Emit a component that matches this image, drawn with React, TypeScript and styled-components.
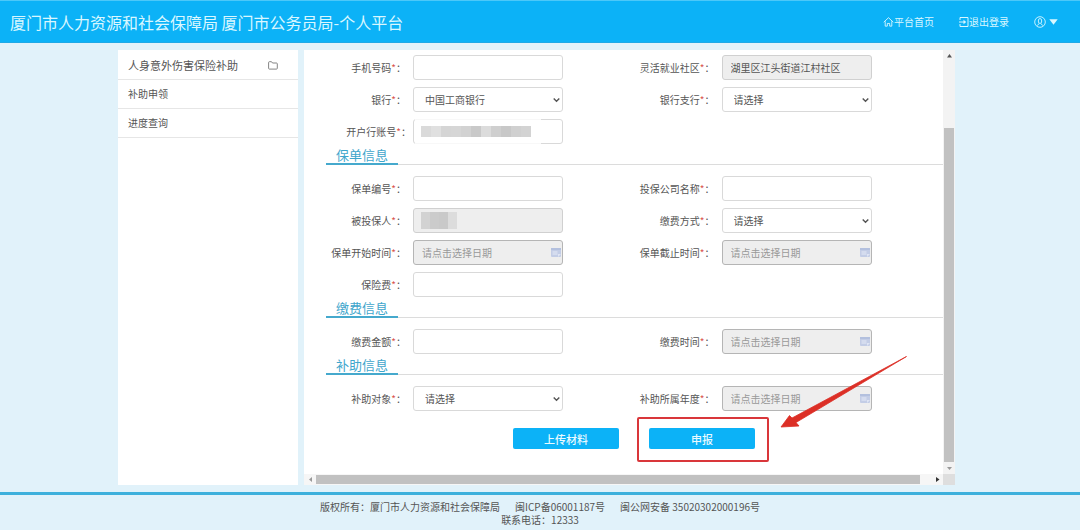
import React, { useId } from 'react';
import styled, { createGlobalStyle, css } from 'styled-components';

const GlobalStyle = createGlobalStyle`
  *, *::before, *::after { box-sizing: border-box; }
  body {
    margin: 0;
    background: #e1f2fa;
    color: #555;
    font-family: "Noto Sans CJK SC", sans-serif;
    font-size: 10px;
    line-height: 12px;
  }
  button, input, select { font: inherit; color: inherit; margin: 0; }
  a { color: inherit; text-decoration: none; }
`;

const Page = styled.div`
  display: flex;
  flex-direction: column;
  min-height: 100vh;
`;

const Header = styled.header`
  display: flex;
  align-items: center;
  justify-content: space-between;
  height: 43px;
  padding: 0 22px 0 10px;
  background: #0cb2f7;
  border-top: 1px solid #4cc8f9;
  border-bottom: 1px solid #1fa9e6;
  color: #d9f7ff;
`;

const SiteTitle = styled.h1`
  margin: 0;
  font-size: 16px;
  font-weight: 400;
  line-height: 24px;
  white-space: nowrap;
`;

const Nav = styled.nav`
  display: flex;
  align-items: center;
  gap: 25px;
  white-space: nowrap;
`;

const NavLink = styled.a`
  display: flex;
  align-items: center;
`;

const UserButton = styled.button`
  display: flex;
  align-items: center;
  gap: 3px;
  padding: 0;
  border: 0;
  background: none;
  cursor: pointer;
`;

const Body = styled.div`
  display: flex;
  flex: 1;
  gap: 6px;
  padding: 7px 125px 7px 118px;
`;

const Sidebar = styled.aside`
  flex: 0 0 180px;
  padding-top: 1px;
  background: #fff;
`;

const Menu = styled.ul`
  margin: 0;
  padding: 0;
  list-style: none;
`;

const MenuItem = styled.li`
  border-bottom: 1px solid #e6e6e6;
`;

const MenuLink = styled.a<{ $heading?: boolean }>`
  display: flex;
  align-items: center;
  justify-content: space-between;
  height: 28px;
  padding: 0 20px 0 10px;
  font-size: ${p => (p.$heading ? '11px' : '10px')};
`;

const Panel = styled.main`
  display: grid;
  flex: 1;
  min-width: 0;
  grid-template-columns: minmax(0, 1fr) 12px;
  grid-template-rows: 1fr 11px;
  background: #fff;
`;

const Form = styled.form`
  padding: 5px 0 25px 22px;
`;

const Fields = styled.div`
  display: grid;
  grid-template-columns: 1fr 1fr;
  row-gap: 7px;
`;

const FieldRow = styled.div<{ $first?: boolean; $tight?: boolean }>`
  display: flex;
  align-items: center;
  gap: ${p => (p.$tight ? '2px' : '7px')};
  height: 25px;
  ${p => p.$first && css`grid-column: 1;`}
`;

const Label = styled.label<{ $tight?: boolean }>`
  flex: 0 0 ${p => (p.$tight ? '85px' : '80px')};
  display: flex;
  justify-content: flex-end;
  white-space: nowrap;
`;

const Required = styled.span`
  color: #d9534f;
`;

const Control = styled.div`
  position: relative;
  width: 150px;
`;

const box = css`
  display: block;
  width: 100%;
  height: 25px;
  border: 1px solid #d9d9d9;
  border-radius: 3px;
  background: #fff;
  outline: 0;
`;

const TextInput = styled.input<{ $date?: boolean }>`
  ${box}
  padding: 0 8px;
  &:read-only {
    background: #eee;
    border-color: ${p => (p.$date ? '#b5b5b5' : '#d0d0d0')};
  }
  &::placeholder { color: #999; opacity: 1; }
`;

const Select = styled.select`
  ${box}
  padding: 0 11px;
  appearance: none;
`;

const Trailing = styled.span`
  position: absolute;
  top: 0;
  bottom: 0;
  right: 2px;
  display: flex;
  align-items: center;
  pointer-events: none;
`;

const Mask = styled.span<{ $veil?: boolean }>`
  position: absolute;
  top: ${p => (p.$veil ? '0' : '4px')};
  left: ${p => (p.$veil ? '2px' : '8px')};
  display: flex;
  padding: ${p => (p.$veil ? '7px 10px 7px 6px' : '0')};
  background: rgba(255, 255, 255, 0.8);
  pointer-events: none;
`;

const MaskBlock = styled.span<{ $tone: string; $tall?: boolean }>`
  width: ${p => (p.$tall ? '9px' : '10px')};
  height: ${p => (p.$tall ? '17px' : '11px')};
  background: ${p => p.$tone};
`;

const SectionHead = styled.div`
  display: flex;
  height: 21px;
  margin-bottom: 11px;
  border-bottom: 1px solid #dcdcdc;
`;

const SectionTitle = styled.h2`
  height: 21px;
  margin: 0;
  padding: 0 10px;
  border-bottom: 2px solid #45a9cd;
  color: #3fa6cc;
  font-size: 13px;
  font-weight: 400;
  line-height: 22px;
`;

const Actions = styled.div`
  display: flex;
  gap: 30px;
  padding: 17px 0 0 187px;
`;

const ActionButton = styled.button`
  display: block;
  width: 106px;
  height: 21px;
  padding: 0;
  border: 0;
  border-radius: 2px;
  background: #0cb2f7;
  color: #eafaff;
  font-size: 11px;
  font-weight: 500;
  cursor: pointer;
`;

const Highlighted = styled.div`
  position: relative;
`;

const HighlightFrame = styled.span`
  position: absolute;
  top: -11px;
  right: -14px;
  bottom: -13px;
  left: -12px;
  border: 2px solid #d9363a;
  border-radius: 2px;
  pointer-events: none;
`;

const Arrow = styled.svg`
  position: absolute;
  left: 131px;
  bottom: 20px;
  pointer-events: none;
`;

const VBar = styled.div`
  display: flex;
  flex-direction: column;
  align-items: center;
  justify-content: space-between;
  padding: 3px 0;
  background: #f3f3f3;
`;

const VThumb = styled.span`
  flex: 1;
  width: 10px;
  margin: 70px 0 4px;
  background: #c1c1c1;
`;

const HBar = styled.div`
  display: flex;
  align-items: center;
  padding: 0 3px 0 4px;
  background: #f6f6f6;
`;

const HThumb = styled.span`
  flex: 1;
  height: 9px;
  margin: 0 15px 0 3px;
  background: #c1c1c1;
`;

const Corner = styled.div`
  background: #dedede;
`;

const Footer = styled.footer`
  border-top: 3px solid #3db0dc;
  padding: 5px 0 4px;
  line-height: 13px;
  text-align: center;
  color: #555;
`;

const FooterLine = styled.div`
  display: flex;
  justify-content: center;
  gap: 15px;
`;

const HomeIcon = () => (
  <svg width="11" height="12" viewBox="0 0 12 12" fill="none" stroke="currentColor" strokeWidth="1" aria-hidden="true">
    <path d="M0.8 6.2 6 1.3l5.2 4.9M2.4 5.2v5.3h2.3V7.6h2.6v2.9h2.3V5.2" />
  </svg>
);

const LogoutIcon = () => (
  <svg width="10" height="12" viewBox="0 0 10 12" fill="none" stroke="currentColor" strokeWidth="1" aria-hidden="true">
    <path d="M1 4V1.5h8v9H1V8M0 6h5.5" />
    <path d="M4.5 3.8 7.2 6 4.5 8.2Z" fill="currentColor" stroke="none" />
  </svg>
);

const UserIcon = () => (
  <svg width="12" height="12" viewBox="0 0 12 12" fill="none" stroke="currentColor" strokeWidth="0.9" aria-hidden="true">
    <circle cx="6" cy="6" r="5.3" />
    <ellipse cx="6" cy="5" rx="1.7" ry="2.5" />
    <path d="M3.4 9.6c.2-1 .9-1.500 1.700-1.800M8.600 9.600C8.400 8.600 7.700 8.100 6.900 7.800" />
  </svg>
);

const CaretIcon = () => (
  <svg width="9" height="6" viewBox="0 0 9 6" fill="currentColor" aria-hidden="true">
    <path d="M0.300 0.300h8.400L4.500 5.700Z" />
  </svg>
);

const FolderIcon = () => (
  <svg width="10" height="9" viewBox="0 0 10 9" fill="none" stroke="#777" strokeWidth="0.9" aria-hidden="true">
    <path d="M0.600 7.300V1.500c0-.5.300-.8.800-.8h2.100l1 1.300h4c.5 0 .8.300.8.800v4.500c0 .5-.3.800-.8.800H1.400c-.5 0-.8-.3-.8-.8Z" />
  </svg>
);

const ChevronIcon = () => (
  <svg width="9" height="6" viewBox="0 0 9 6" fill="none" stroke="#555" strokeWidth="1.400" aria-hidden="true">
    <path d="M1.700 1.400 4.500 4.200 7.300 1.400" />
  </svg>
);

const CalendarIcon = () => (
  <svg width="10" height="9" viewBox="0 0 10 9" aria-hidden="true">
    <rect width="10" height="9" rx="1" fill="#c3cde6" />
    <rect width="10" height="2" fill="#b3c0de" />
    <path d="M1.500 4h5M1.500 6h5" stroke="#e6ebf7" strokeWidth="1" />
    <path d="M7 9V6h3" fill="#dfe5f4" />
  </svg>
);

const ScrollArrow = ({ d, color = '#555' }: { d: string; color?: string }) => (
  <svg width="5" height="5" viewBox="0 0 5 5" fill={color} aria-hidden="true">
    <path d={d} />
  </svg>
);

type FieldProps = {
  label: string;
  kind?: 'text' | 'select' | 'date';
  value?: string;
  locked?: boolean;
  first?: boolean;
  tight?: boolean;
  mask?: React.ReactNode;
};

function Field({ label, kind = 'text', value, locked, first, tight, mask }: FieldProps) {
  const id = useId();
  return (
    <FieldRow $first={first} $tight={tight}>
      <Label htmlFor={id} $tight={tight}>
        {label}
        <Required>*</Required>：
      </Label>
      <Control>
        {kind === 'select' && (
          <>
            <Select id={id}>
              <option>{value ?? '请选择'}</option>
            </Select>
            <Trailing><ChevronIcon /></Trailing>
          </>
        )}
        {kind === 'date' && (
          <>
            <TextInput id={id} readOnly $date placeholder="请点击选择日期" />
            <Trailing><CalendarIcon /></Trailing>
          </>
        )}
        {kind === 'text' && <TextInput id={id} defaultValue={value} readOnly={locked} />}
        {mask}
      </Control>
    </FieldRow>
  );
}

const accountTones = ['#dadada', '#e0e0e0', '#d5d5d5', '#d6d6d6', '#d2d2d2', '#c9c9c9', '#dcdcdc', '#cfcfcf', '#c8c8c8', '#d0d0d0', '#d3d3d3'];
const nameTones = ['#d2d2d2', '#cbcbcb', '#c9c9c9', '#dcdcdc'];

const Section = ({ title }: { title: string }) => (
  <SectionHead>
    <SectionTitle>{title}</SectionTitle>
  </SectionHead>
);

export default function App() {
  return (
    <Page>
      <GlobalStyle />
      <Header>
        <SiteTitle>厦门市人力资源和社会保障局 厦门市公务员局-个人平台</SiteTitle>
        <Nav>
          <NavLink href="#home"><HomeIcon />平台首页</NavLink>
          <NavLink href="#logout"><LogoutIcon />退出登录</NavLink>
          <UserButton type="button" aria-label="用户"><UserIcon /><CaretIcon /></UserButton>
        </Nav>
      </Header>

      <Body>
        <Sidebar>
          <Menu>
            <MenuItem><MenuLink href="#insurance" $heading>人身意外伤害保险补助<FolderIcon /></MenuLink></MenuItem>
            <MenuItem><MenuLink href="#apply">补助申领</MenuLink></MenuItem>
            <MenuItem><MenuLink href="#progress">进度查询</MenuLink></MenuItem>
          </Menu>
        </Sidebar>

        <Panel>
          <Form onSubmit={e => e.preventDefault()}>
            <Fields>
              <Field label="手机号码" />
              <Field label="灵活就业社区" value="湖里区江头街道江村社区" locked />
              <Field label="银行" kind="select" value="中国工商银行" />
              <Field label="银行支行" kind="select" />
              <Field
                label="开户行账号"
                tight
                mask={<Mask $veil>{accountTones.map((t, i) => <MaskBlock key={i} $tone={t} />)}</Mask>}
              />
            </Fields>

            <Section title="保单信息" />
            <Fields>
              <Field label="保单编号" />
              <Field label="投保公司名称" />
              <Field
                label="被投保人"
                locked
                mask={<Mask>{nameTones.map((t, i) => <MaskBlock key={i} $tone={t} $tall />)}</Mask>}
              />
              <Field label="缴费方式" kind="select" />
              <Field label="保单开始时间" kind="date" />
              <Field label="保单截止时间" kind="date" />
              <Field label="保险费" first />
            </Fields>

            <Section title="缴费信息" />
            <Fields>
              <Field label="缴费金额" />
              <Field label="缴费时间" kind="date" />
            </Fields>

            <Section title="补助信息" />
            <Fields>
              <Field label="补助对象" kind="select" />
              <Field label="补助所属年度" kind="date" />
            </Fields>

            <Actions>
              <ActionButton type="button">上传材料</ActionButton>
              <Highlighted>
                <ActionButton type="submit">申报</ActionButton>
                <HighlightFrame />
                <Arrow width="128" height="74" viewBox="0 0 128 74" aria-hidden="true">
                  <path d="M126.500 1.500 16 67.500 19 71 1 72 9.500 60.500 12 63Z" fill="#dc2f26" stroke="#dc2f26" strokeWidth="0.800" strokeLinejoin="round" />
                </Arrow>
              </Highlighted>
            </Actions>
          </Form>

          <VBar>
            <ScrollArrow d="M0 4.500h5L2.500 1Z" />
            <VThumb />
            <ScrollArrow d="M0 1h5L2.500 4Z" color="#999" />
          </VBar>
          <HBar>
            <ScrollArrow d="M4 0v5L1 2.500Z" color="#999" />
            <HThumb />
            <ScrollArrow d="M1 0v5L4.500 2.500Z" color="#333" />
          </HBar>
          <Corner />
        </Panel>
      </Body>

      <Footer>
        <FooterLine>
          <span>版权所有：厦门市人力资源和社会保障局</span>
          <span>闽ICP备06001187号</span>
          <span>闽公网安备 35020302000196号</span>
        </FooterLine>
        <FooterLine>联系电话：12333</FooterLine>
      </Footer>
    </Page>
  );
}
